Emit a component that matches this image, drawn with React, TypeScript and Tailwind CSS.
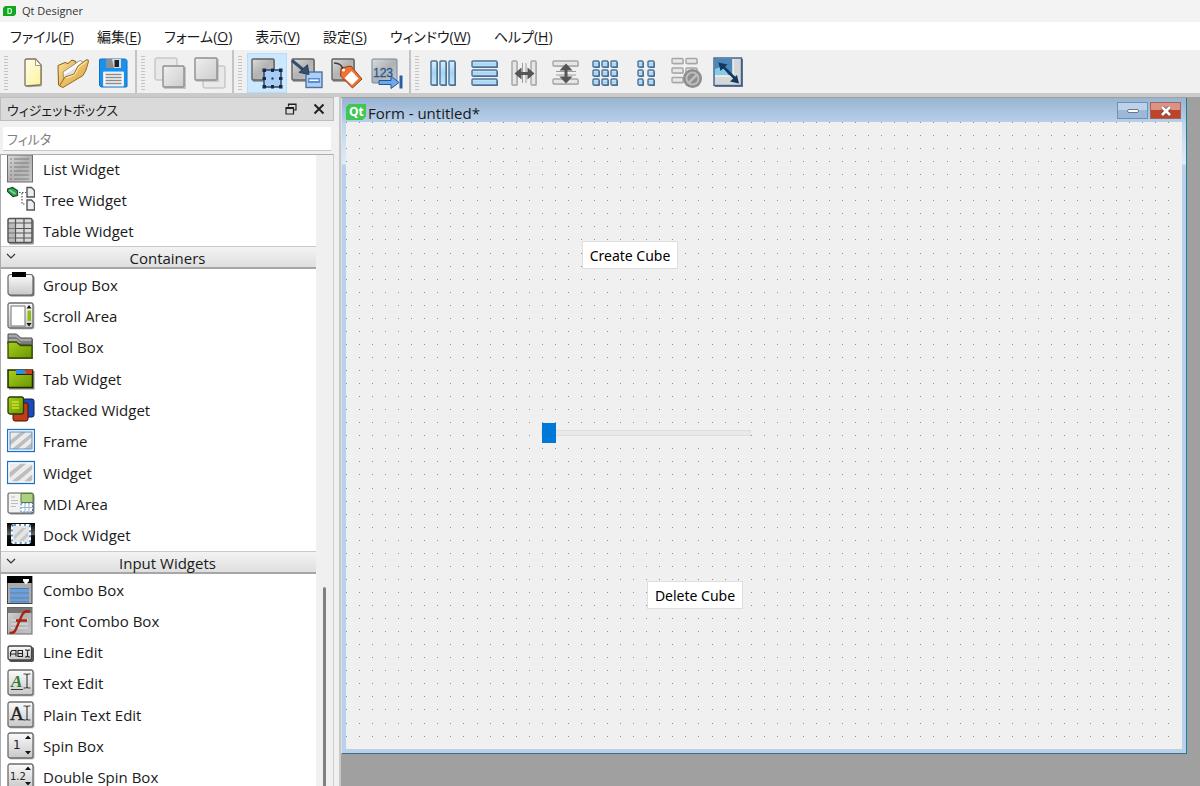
import React from "react";

const UI = "font-['Open_Sans','Noto_Sans_CJK_JP',sans-serif]";

/* ---------- shared gradients ---------- */
function Defs() {
  return (
    <svg className="absolute size-0" aria-hidden="true">
      <defs>
        <linearGradient id="steel" x1="0" y1="0" x2="1" y2="1">
          <stop offset="0" stopColor="#dcdcdc" />
          <stop offset="0.5" stopColor="#b2b2b2" />
          <stop offset="1" stopColor="#c6c6c6" />
        </linearGradient>
        <linearGradient id="pale" x1="0" y1="0" x2="1" y2="1">
          <stop offset="0" stopColor="#efefef" />
          <stop offset="1" stopColor="#cdcdcd" />
        </linearGradient>
        <linearGradient id="sky" x1="0" y1="0" x2="0" y2="1">
          <stop offset="0" stopColor="#d8f0ff" />
          <stop offset="0.5" stopColor="#a5d4f3" />
          <stop offset="1" stopColor="#c4e6fb" />
        </linearGradient>
        <linearGradient id="yellow" x1="0" y1="0" x2="1" y2="1">
          <stop offset="0" stopColor="#fffdee" />
          <stop offset="1" stopColor="#fdf296" />
        </linearGradient>
        <linearGradient id="folder" x1="0" y1="0" x2="1" y2="1">
          <stop offset="0" stopColor="#ffe49a" />
          <stop offset="1" stopColor="#d39c35" />
        </linearGradient>
        <linearGradient id="green" x1="0" y1="0" x2="1" y2="1">
          <stop offset="0" stopColor="#a6cf1d" />
          <stop offset="1" stopColor="#6c9600" />
        </linearGradient>
        <linearGradient id="panel" x1="0" y1="0" x2="0" y2="1">
          <stop offset="0" stopColor="#fbfbfb" />
          <stop offset="1" stopColor="#c8c8c8" />
        </linearGradient>
        <linearGradient id="dark" x1="0" y1="0" x2="0" y2="1">
          <stop offset="0" stopColor="#000" />
          <stop offset="0.5" stopColor="#666" />
          <stop offset="0.55" stopColor="#111" />
          <stop offset="1" stopColor="#000" />
        </linearGradient>
      </defs>
    </svg>
  );
}

function Svg({ children }: { children: React.ReactNode }) {
  return (
    <svg viewBox="0 0 32 32" className="size-8 shrink-0" aria-hidden="true">
      {children}
    </svg>
  );
}

/* ---------- toolbar icons ---------- */
const NewIcon = () => (
  <Svg>
    <path d="M9 4q0-1.500 1.500-1.500h9l5.500 6V28q0 1.500-1.500 1.500l-12 .8q-1.500 0-2.500-1.500z" fill="#999" opacity="0.700" />
    <path d="M8 3.500q0-1.500 1.500-1.500h9l5.500 6V26.500q0 1.500-1.500 1.500l-13 1q-1.500 0-1.500-1.500z" fill="url(#yellow)" stroke="#7b745f" strokeWidth="1.300" />
    <path d="M18.500 2v6.500H24z" fill="#fff" stroke="#8b8470" strokeWidth="0.800" />
  </Svg>
);
const OpenIcon = () => (
  <Svg>
    <path d="M1 8.500l7-3 3 1 4-3.500 4 1.500v5L4 29 1.500 28z" fill="url(#folder)" stroke="#8c5e1b" strokeWidth="1" />
    <path d="M6 15L23 3.500l4 2 1 9L7 24z" fill="#fafafa" stroke="#8d8d8d" strokeWidth="0.900" />
    <path d="M7 18L27 6l2 3L8 23z" fill="#e0e2e6" />
    <path d="M2.500 29L8 20l9-3L21 9l8-6q3-1 2.500 1.500L29 13 26 18.500 6 30.500z" fill="url(#folder)" stroke="#9a6a1f" strokeWidth="1" />
    <path d="M9 21l8.500-3L22 10l7.500-5.500" fill="none" stroke="#fff0bd" />
  </Svg>
);
const SaveIcon = () => (
  <Svg>
    <path d="M2.500 3q0-1 1-1h25L30 3.500V29q0 1-1 1H4l-1.500-1.500z" fill="#1992ee" stroke="#0d72cb" strokeWidth="1" />
    <path d="M9 2h15v9H9z" fill="#d9dde2" />
    <path d="M9 2h6l2 9H9z" fill="#8a8f94" />
    <path d="M17.500 3H22v7h-4.500z" fill="#222" />
    <path d="M6.500 15h20v14h-20z" fill="#fafafa" stroke="#e1e9f2" />
    <path d="M8.500 17.500h16M8.500 20.500h16M8.500 23.500h16M8.500 26.500h16" stroke="#8b8b8b" strokeWidth="1.300" />
  </Svg>
);
const BackIcon = () => (
  <Svg>
    <rect x="1" y="1" width="22" height="22" rx="1.500" fill="#e9e9e9" stroke="#b5b5b5" />
    <rect x="10" y="10" width="22" height="22" fill="#aaa" opacity="0.600" />
    <rect x="9" y="9" width="21" height="21" rx="1" fill="url(#pale)" stroke="#8e8e8e" strokeWidth="1.400" />
  </Svg>
);
const FrontIcon = () => (
  <Svg>
    <rect x="9" y="9" width="22" height="22" rx="1.500" fill="#e9e9e9" stroke="#b5b5b5" />
    <rect x="2" y="2" width="23" height="23" fill="#aaa" opacity="0.500" />
    <rect x="1" y="1" width="22" height="22" rx="1" fill="url(#pale)" stroke="#8e8e8e" strokeWidth="1.400" />
  </Svg>
);
const GreyBox = ({ w = 22 }: { w?: number }) => (
  <>
    <rect x="2" y="3" width={w} height="22" fill="#888" opacity="0.700" />
    <rect x="1" y="2" width={w} height="21" rx="1" fill="url(#steel)" stroke="#616161" strokeWidth="1.400" />
  </>
);
const EditWidgetsIcon = () => (
  <Svg>
    <GreyBox />
    <rect x="13" y="13" width="17" height="17" fill="#a9cdf5" stroke="#2c4466" strokeWidth="1.500" />
    <path d="M11.500 11.500h3.500v3.500h-3.500zM20 11.500h3v3.500h-3zM28 11.500h3.500v3.500H28zM11.500 20h3.500v3h-3.500zM28 20h3.500v3H28zM11.500 28h3.500v3.500h-3.500zM20 28h3v3.500h-3zM28 28h3.500v3.500H28zM20.500 20.500h2v2h-2z" fill="#172b48" />
  </Svg>
);
const SignalsIcon = () => (
  <Svg>
    <GreyBox />
    <rect x="15" y="15" width="16" height="15.500" fill="#a9d0f7" stroke="#52709b" strokeWidth="1.400" />
    <path d="M17 21h12v5H17z" fill="#5d8dce" />
    <path d="M18.500 22.500h9v1.500h-9z" fill="#fff" />
    <path d="M1 3.500l11 9" stroke="#35506f" strokeWidth="3" />
    <path d="M18 17.500l-10-2.200 3-2-1.500-2 2.500 0.500 4.500-4z" fill="#35506f" stroke="#263d5c" />
  </Svg>
);
const BuddiesIcon = () => (
  <Svg>
    <GreyBox />
    <path d="M10 11l10-2L31 22l-9.500 9L9.500 19z" fill="#ef7133" stroke="#934018" strokeWidth="1" />
    <path d="M20.500 14l7 7.500-6.500 6.500-7.500-7z" fill="#fff" />
    <path d="M3 6q8 0 9 7" fill="none" stroke="#3c3c3c" strokeWidth="1.400" />
    <circle cx="12.500" cy="13" r="1.500" fill="#fff" />
  </Svg>
);
const TabOrderIcon = () => (
  <Svg>
    <rect x="1" y="2" width="25" height="24" rx="1" fill="url(#steel)" stroke="#7288a3" />
    <text x="2" y="20" fontSize="12" fill="#1d5a9b" stroke="#1d5a9b" strokeWidth="0.300" className="font-['Liberation_Sans',sans-serif]">123</text>
    <path d="M8 23.500h12V19l8 6.500-8 6V27.500H8z" fill="#6daaea" stroke="#25559a" />
    <path d="M28.500 18.500h3v13h-3z" fill="#2a5ca1" />
  </Svg>
);
type BarProps = { x: number; y: number; w: number; h: number; off?: boolean };
const Bar = ({ x, y, w, h, off }: BarProps) => (
  <>
    <rect x={x + 1} y={y + 1} width={w} height={h} rx="1" fill={off ? "#c2c2c2" : "#39597d"} opacity="0.900" />
    <rect x={x} y={y} width={w} height={h} rx="1" fill={off ? "#e6e6e6" : "url(#sky)"} stroke={off ? "#a6a6a6" : "#4d7298"} strokeWidth="1.400" />
  </>
);
const HorizontalIcon = () => <Svg>{[3, 12, 21].map((x) => <Bar key={x} x={x} y={4} w={6} h={24} />)}</Svg>;
const VerticalIcon = () => <Svg>{[4, 13, 22].map((y) => <Bar key={y} x={3} y={y} w={25} h={6} />)}</Svg>;
const HSplitIcon = () => (
  <Svg>
    <Bar x={3} y={4} w={5} h={24} off />
    <Bar x={22} y={4} w={5} h={24} off />
    <path d="M13.500 6v20M17 6v20" stroke="#888" strokeWidth="0.800" />
    <path d="M5.500 16.500l7-6v4.500h6v-4.500l7 6-7 6V18h-6v4.500z" fill="#555" />
  </Svg>
);
const VSplitIcon = () => (
  <Svg>
    <Bar x={3} y={4} w={25} h={5} off />
    <Bar x={3} y={22} w={25} h={5} off />
    <path d="M6 14.500h20M6 18h20" stroke="#888" strokeWidth="0.800" />
    <path d="M16 6.500l6.500 7h-5v6h5l-6.500 7-6.500-7h5v-6h-5z" fill="#555" />
  </Svg>
);
const GridIcon = () => (
  <Svg>{[4, 13, 22].map((y) => [3, 12, 21].map((x) => <Bar key={`${x}-${y}`} x={x} y={y} w={6} h={6} />))}</Svg>
);
const FormLayoutIcon = () => (
  <Svg>{[4, 13, 22].map((y) => [7, 17].map((x) => <Bar key={`${x}-${y}`} x={x} y={y} w={x === 7 ? 5 : 6} h={6} />))}</Svg>
);
const BreakIcon = () => (
  <Svg>
    {[1.500, 11, 20.500].map((y) => [1, 15].map((x) => <Bar key={`${x}-${y}`} x={x} y={y} w={11} h={5} off />))}
    <circle cx="21.500" cy="21.500" r="9.500" fill="#8d8d8d" />
    <circle cx="21.500" cy="21.500" r="6" fill="none" stroke="#bcbcbc" strokeWidth="2" />
    <path d="M17.500 26l8.500-8.500" stroke="#bcbcbc" strokeWidth="2.500" />
  </Svg>
);
const AdjustIcon = () => (
  <Svg>
    <rect x="3" y="2" width="28" height="28" fill="#6c7683" />
    <rect x="2" y="1" width="27.500" height="27.500" fill="#d7d7d7" stroke="#36628f" strokeWidth="1.400" />
    <path d="M3 2h18v17H3z" fill="#4b87bb" />
    <path d="M3 19V12l8-3 6 10z" fill="#88cbe9" />
    <path d="M21 2v17H3" fill="none" stroke="#f4f4f4" strokeWidth="1.500" />
    <path d="M10 8.500l13 13" stroke="#12395e" strokeWidth="2.500" />
    <path d="M6.500 5.500l9 2-7 6.500zM27 26.500l-9-2 7-6.500z" fill="#12395e" />
  </Svg>
);

/* ---------- widget box icons ---------- */
const IconBox = ({ children }: { children: React.ReactNode }) => (
  <svg viewBox="0 0 28 28" className="size-7 shrink-0" aria-hidden="true">
    {children}
  </svg>
);
const PanelBase = () => (
  <>
    <rect x="2" y="2" width="25.500" height="25.500" rx="2" fill="#999" opacity="0.600" />
    <rect x="1" y="1" width="25" height="25" rx="2" fill="url(#panel)" stroke="#6c6c6c" strokeWidth="1.300" />
  </>
);
const ListIcon = () => (
  <IconBox>
    <rect x="0.500" y="0" width="25" height="27" fill="url(#steel)" stroke="#6d6d6d" />
    <path d="M3 4h2M3 8h2M3 12h2M3 16h2M3 20h2M3 24h2M7 4h15M7 8h15M7 12h15M7 16h15M7 20h15M7 24h15" stroke="#7c7c7c" strokeWidth="1.200" />
  </IconBox>
);
const TreeIcon = () => (
  <IconBox>
    <path d="M0.500 3l5-1.500 5 3v5L6 10.500 0.500 5.500z" fill="#33a650" stroke="#174f26" strokeWidth="1.200" />
    <path d="M2.500 4l6 4" stroke="#8cdf9d" strokeWidth="1.500" />
    <path d="M12 6.500h7M15 7v11h4" fill="none" stroke="#555" strokeWidth="1.200" strokeDasharray="1.500 1.500" />
    <path d="M20 1.500h4.500l3 3V11H20zM20 14h4.500l3 3v7H20z" fill="#eee" stroke="#555" strokeWidth="1.400" />
  </IconBox>
);
const TableIcon = () => (
  <IconBox>
    <rect x="2" y="2.500" width="25" height="25" rx="1.500" fill="#999" />
    <rect x="1" y="1.500" width="24" height="24" rx="1.500" fill="#dadada" stroke="#555" strokeWidth="1.500" />
    <path d="M1 6h24M1 11.500h24M1 16h24M1 21h24M8.500 1.500v24M17 1.500v24" stroke="#555" strokeWidth="1.200" />
    <path d="M2 7h6v18H2z" fill="#999" opacity="0.500" />
  </IconBox>
);
const GroupIcon = () => (
  <IconBox>
    <rect x="2" y="4.500" width="25.500" height="21" rx="2.500" fill="#777" />
    <rect x="1" y="3.500" width="25" height="20.500" rx="2.500" fill="url(#panel)" stroke="#666" strokeWidth="1.200" />
    <path d="M5 1h14v5H5z" fill="#000" />
  </IconBox>
);
const ScrollIcon = () => (
  <IconBox>
    <PanelBase />
    <rect x="4" y="4" width="14" height="20" fill="#fff" stroke="#888" strokeWidth="1.200" />
    <path d="M22 3l2.500 3.500h-5zM22 24.500l2.500-3.500h-5z" fill="#111" />
    <path d="M20.500 8.500h3.500v10.500h-3.500z" fill="#8cbe10" />
  </IconBox>
);
const ToolBoxIcon = () => (
  <IconBox>
    <path d="M2 2h9l4 4h11v20H2z" fill="#777" />
    <path d="M1 1h8.500l4 4H25v6H1z" fill="#a7a7a7" stroke="#4b4b4b" />
    <path d="M1 5h8.500l4 4H25" fill="none" stroke="#555" />
    <path d="M1 9h8.500l4 3.500H25V25H1z" fill="url(#green)" stroke="#344800" strokeWidth="1.300" />
  </IconBox>
);
const TabIcon = () => (
  <IconBox>
    <rect x="2" y="6" width="25.500" height="18.500" fill="#888" />
    <rect x="1" y="5" width="24.500" height="17.500" fill="url(#green)" stroke="#202a00" strokeWidth="1.500" />
    <path d="M9 5h9v4H9z" fill="#2b8ded" />
    <path d="M18.500 5H25v4h-6.500z" fill="#d93a1e" />
    <path d="M9 9.500h16" stroke="#202a00" />
  </IconBox>
);
const StackIcon = () => (
  <IconBox>
    <rect x="12" y="3" width="15" height="18" rx="2" fill="#174cb9" stroke="#0b2252" />
    <rect x="6" y="7" width="15" height="18" rx="2" fill="#c53b19" stroke="#3f1207" />
    <rect x="1" y="1" width="15.500" height="17" rx="2" fill="url(#green)" stroke="#28370a" strokeWidth="1.300" />
    <path d="M5 6h7M5 9h7M5 12h7" stroke="#ecff36" strokeWidth="1.200" />
  </IconBox>
);
const Stripes = () => (
  <path d="M3 14L14 4h5L3 20zM5 24L25 5v5L11 24zM17 24l8-8v6l-2 2z" fill="#bdbdbd" />
);
const FrameIcon = () => (
  <IconBox>
    <rect x="0.500" y="2.500" width="27" height="22" fill="#fff" stroke="#1e70c5" strokeWidth="1.300" />
    <rect x="3" y="5" width="22" height="17" fill="#ececec" />
    <svg x="3" y="5" width="22" height="17" viewBox="3 4 22 20" preserveAspectRatio="none"><Stripes /></svg>
    <rect x="3" y="5" width="22" height="17" fill="none" stroke="#5e94c9" />
  </IconBox>
);
const WidgetIcon = () => (
  <IconBox>
    <rect x="0.500" y="2.500" width="27" height="22" fill="#fff" stroke="#1e70c5" strokeWidth="1.300" />
    <rect x="2.500" y="4.500" width="23" height="18" fill="#ececec" />
    <svg x="2.500" y="4.500" width="23" height="18" viewBox="3 4 22 20" preserveAspectRatio="none"><Stripes /></svg>
  </IconBox>
);
const MdiIcon = () => (
  <IconBox>
    <rect x="2" y="4" width="25.500" height="20.500" rx="2" fill="#888" />
    <rect x="1" y="3" width="25" height="20" rx="1.500" fill="#f2f2f2" stroke="#666" strokeWidth="1.200" />
    <path d="M14 3.500h12v9H14z" fill="#add180" stroke="#5a7c38" />
    <path d="M14 13h11.500v9H14z" fill="#fff" stroke="#3976bb" strokeDasharray="2 1.500" />
    <path d="M18 13v9M22 13v9M14 17.500h12" stroke="#9bb5d4" />
    <path d="M4 7h4M4 10.500h7M4 13.500h7M4 16.500h5" stroke="#bdbdbd" />
  </IconBox>
);
const DockIcon = () => (
  <IconBox>
    <rect x="0" y="2" width="28" height="23" fill="url(#dark)" />
    <rect x="5" y="4" width="18" height="18" rx="2" fill="#e5e5e5" stroke="#fff" strokeWidth="2" />
    <rect x="5" y="4" width="18" height="18" rx="2" fill="none" stroke="#2675bf" strokeWidth="1.500" strokeDasharray="2 3" />
    <path d="M7 15l8-8h4L7 19zM12 20l9-9v4l-5 5z" fill="#c6c6c6" />
  </IconBox>
);
const ComboIcon = () => (
  <IconBox>
    <rect x="0.500" y="0.500" width="24.500" height="27" fill="#a9abad" stroke="#444" />
    <path d="M0 0h25v7H0z" fill="#000" />
    <path d="M16 3h6v2L19 8.500 16 5z" fill="#fff" />
    <path d="M3 12.500h19v4H3zM3 17.500h19v4H3zM3 22.500h19v3.500H3z" fill="#6ba0df" />
    <path d="M3 17h19M3 22h19M3 12.500h19M3 26h19" stroke="#35679e" strokeWidth="0.700" />
  </IconBox>
);
const FontIcon = () => (
  <IconBox>
    <rect x="0.500" y="0.500" width="24.500" height="26.500" fill="url(#steel)" stroke="#666" />
    <path d="M1 1h24v5H1z" fill="#777" />
    <path d="M4 13h17M4 17h17M4 21h17" stroke="#d0d0d0" strokeWidth="2" />
    <path d="M23 5q-5-2.500-8 3L9 22q-2 5-6.500 3.500M9 13.500h11" fill="none" stroke="#a62214" strokeWidth="2.300" />
  </IconBox>
);
const LineEditIcon = () => (
  <IconBox>
    <rect x="2" y="9" width="25" height="15" rx="2" fill="#555" />
    <rect x="1" y="8" width="23.500" height="14" rx="2" fill="url(#panel)" stroke="#444" strokeWidth="1.300" />
    <path d="M3.500 18.500v-4l1.500-2h4v6M3.500 16H9M11 12.500v6h4.500v-6zM11 15.500h4.500M18 12h1.500l1 1 1-1H23M20.500 13v5.500M18 19h1.500l1-1 1 1H23" fill="none" stroke="#222" strokeWidth="1.100" />
  </IconBox>
);
const Caret = () => <path d="M16.500 5h2.500l1 1 1-1h2.500M20 6v12M16.500 19h2.500l1-1 1 1h2.500" fill="none" stroke="#444" strokeWidth="1.200" />;
const TextEditIcon = () => (
  <IconBox>
    <PanelBase />
    <text x="4" y="18" fontSize="17" fontStyle="italic" fontWeight="bold" fill="#2e7a36" className="font-['Liberation_Serif',serif]">A</text>
    <path d="M4 20.500h12" stroke="#333" />
    <Caret />
  </IconBox>
);
const PlainIcon = () => (
  <IconBox>
    <PanelBase />
    <text x="3" y="19" fontSize="19" fill="#222" stroke="#222" strokeWidth="0.400" className="font-['Liberation_Serif',serif]">A</text>
    <Caret />
  </IconBox>
);
const Arrows = () => <path d="M21 3.500l3 3.500h-6zM21 22.500l3-3.500h-6z" fill="#111" />;
const SpinIcon = () => (
  <IconBox>
    <PanelBase />
    <text x="6" y="17" fontSize="12" fill="#222" className="font-['DejaVu_Sans',sans-serif]">1</text>
    <Arrows />
  </IconBox>
);
const DoubleSpinIcon = () => (
  <IconBox>
    <PanelBase />
    <text x="3" y="17" fontSize="10" fill="#222" className="font-['DejaVu_Sans',sans-serif]">1.2</text>
    <Arrows />
  </IconBox>
);

/* ---------- data ---------- */
type Entry = { label: string; icon: React.ComponentType };

const views: Entry[] = [
  { label: "List Widget", icon: ListIcon },
  { label: "Tree Widget", icon: TreeIcon },
  { label: "Table Widget", icon: TableIcon },
];
const containers: Entry[] = [
  { label: "Group Box", icon: GroupIcon },
  { label: "Scroll Area", icon: ScrollIcon },
  { label: "Tool Box", icon: ToolBoxIcon },
  { label: "Tab Widget", icon: TabIcon },
  { label: "Stacked Widget", icon: StackIcon },
  { label: "Frame", icon: FrameIcon },
  { label: "Widget", icon: WidgetIcon },
  { label: "MDI Area", icon: MdiIcon },
  { label: "Dock Widget", icon: DockIcon },
];
const inputs: Entry[] = [
  { label: "Combo Box", icon: ComboIcon },
  { label: "Font Combo Box", icon: FontIcon },
  { label: "Line Edit", icon: LineEditIcon },
  { label: "Text Edit", icon: TextEditIcon },
  { label: "Plain Text Edit", icon: PlainIcon },
  { label: "Spin Box", icon: SpinIcon },
  { label: "Double Spin Box", icon: DoubleSpinIcon },
];
const menus = [
  ["ファイル", "F"],
  ["編集", "E"],
  ["フォーム", "O"],
  ["表示", "V"],
  ["設定", "S"],
  ["ウィンドウ", "W"],
  ["ヘルプ", "H"],
];

/* ---------- parts ---------- */
function Tool({ label, icon: Icon, active }: Entry & { active?: boolean }) {
  return (
    <button
      aria-label={label}
      className={`flex h-10 min-w-10 items-center justify-center ${active ? "bg-[#cce8ff] outline outline-1 -outline-offset-1 outline-[#b5dcfb]" : ""}`}
    >
      <Icon />
    </button>
  );
}

function ToolGroup({ children, last }: { children: React.ReactNode; last?: boolean }) {
  return (
    <div className={`flex items-center gap-[5px] pl-1 pr-0.5 pt-0.5 ${last ? "" : "border-r-2 border-[#c4c4c4]"}`}>
      <span className="h-9 w-1 bg-[radial-gradient(circle,#c4c4c4_1px,transparent_1px)] bg-[size:2px_3px]" />
      {children}
    </div>
  );
}

function Rows({ items, className }: { items: Entry[]; className: string }) {
  return (
    <ul className={`grid auto-rows-fr pl-1.5 ${className}`}>
      {items.map(({ label, icon: Icon }) => (
        <li key={label} className="flex min-h-0 items-center gap-2">
          <Icon />
          {label}
        </li>
      ))}
    </ul>
  );
}

function SectionHeader({ children }: { children: React.ReactNode }) {
  return (
    <button className="relative flex h-[23px] w-full items-center justify-center border-b-2 border-t border-b-[#a6a6a6] border-t-[#c9c9c9] bg-linear-to-b from-[#f3f3f3] to-[#dfdfdf] pl-[18px] pt-0.5">
      <svg viewBox="0 0 10 10" className="absolute left-[5px] top-1 size-2.5" aria-hidden="true">
        <path d="M1 3l4 4 4-4" fill="none" stroke="#333" strokeWidth="1.200" />
      </svg>
      {children}
    </button>
  );
}

const STEP = 13.055;
const dots = (() => {
  let d = "";
  for (let r = 0; r < 48; r++)
    for (let c = 0; c < 64; c++) d += `M${Math.round(c * STEP)} ${Math.round(r * STEP)}h1v1h-1z`;
  return d;
})();

export default function App() {
  return (
    <div className={`flex h-screen flex-col overflow-hidden bg-[#f0f0f0] text-[15px] leading-5 text-[#1a1a1a] ${UI}`}>
      <Defs />
      <header className="flex h-[22px] shrink-0 items-center gap-1.5 bg-[#f3f3f3] pl-[3px] text-[11px] text-[#333]">
        <svg viewBox="0 0 13 10" className="h-2.5 w-[13px]" aria-hidden="true">
          <path d="M2 0h11v8l-2 2H0V2z" fill="#11a81f" />
          <path d="M5 2.500h1.500q2 0 2 2.500t-2 2.500H5z" fill="none" stroke="#d8ffd8" strokeWidth="1.200" />
        </svg>
        Qt Designer
      </header>

      <nav className="flex h-7 shrink-0 items-center gap-[23px] bg-white pl-2.5 pt-0.5 text-sm [font-feature-settings:'palt']">
        {menus.map(([name, key]) => (
          <button key={key} className="whitespace-nowrap">
            {name}(<span className="underline underline-offset-2">{key}</span>)
          </button>
        ))}
      </nav>

      <div className="flex h-[47px] shrink-0 items-stretch border-b-4 border-[#cacaca]" role="toolbar" aria-label="Tools">
        <ToolGroup>
          <div className="flex">
            <Tool label="New" icon={NewIcon} />
            <Tool label="Open" icon={OpenIcon} />
            <Tool label="Save" icon={SaveIcon} />
          </div>
        </ToolGroup>
        <ToolGroup>
          <div className="flex">
            <Tool label="Send to back" icon={BackIcon} />
            <Tool label="Bring to front" icon={FrontIcon} />
          </div>
        </ToolGroup>
        <ToolGroup>
          <div className="flex">
            <Tool label="Edit widgets" icon={EditWidgetsIcon} active />
            <Tool label="Edit signals" icon={SignalsIcon} />
            <Tool label="Edit buddies" icon={BuddiesIcon} />
            <Tool label="Edit tab order" icon={TabOrderIcon} />
          </div>
        </ToolGroup>
        <ToolGroup last>
          <div className="grid w-[324px] auto-cols-fr grid-flow-col">
            <Tool label="Lay out horizontally" icon={HorizontalIcon} />
            <Tool label="Lay out vertically" icon={VerticalIcon} />
            <Tool label="Horizontal splitter" icon={HSplitIcon} />
            <Tool label="Vertical splitter" icon={VSplitIcon} />
            <Tool label="Grid layout" icon={GridIcon} />
            <Tool label="Form layout" icon={FormLayoutIcon} />
            <Tool label="Break layout" icon={BreakIcon} />
            <Tool label="Adjust size" icon={AdjustIcon} />
          </div>
        </ToolGroup>
      </div>

      <div className="flex min-h-0 flex-1">
        <aside className="flex w-[334px] shrink-0 flex-col">
          <div className="flex h-6 shrink-0 items-center border border-[#bdbdbd] bg-[#dadada] pl-1.5 pr-2 [font-feature-settings:'palt']">
            <h2 className="flex-1 pt-px text-[13px]">ウィジェットボックス</h2>
            <button aria-label="Float" className="mr-4">
              <svg viewBox="0 0 12 12" className="size-3" aria-hidden="true">
                <path d="M3.500 3.500V1h7.500v6H8.500M3 1.500h8M1 4.500h7.500V11H1zM1 5.500h7.500" fill="none" stroke="#222" strokeWidth="1.200" />
              </svg>
            </button>
            <button aria-label="Close">
              <svg viewBox="0 0 12 12" className="size-3" aria-hidden="true">
                <path d="M1.500 1.500l9 9M10.500 1.500l-9 9" stroke="#222" strokeWidth="2" />
              </svg>
            </button>
          </div>
          <input
            aria-label="フィルタ"
            placeholder="フィルタ"
            className="mx-[3px] mb-[3px] mt-1.5 h-6 shrink-0 border-b border-[#c8c8c8] bg-white pl-1 text-[13px] outline-none placeholder:text-[#808080] [font-feature-settings:'palt']"
          />
          <div className="flex min-h-0 flex-1 border-l border-r border-t border-[#a9adb3] border-r-[#cfcfcf]">
            <div className="min-w-0 flex-1 overflow-hidden bg-white">
              <Rows items={views} className="-mt-0.5 h-[93px]" />
              <SectionHeader>Containers</SectionHeader>
              <Rows items={containers} className="h-[282px]" />
              <SectionHeader>Input Widgets</SectionHeader>
              <Rows items={inputs} className="h-[219px]" />
            </div>
            <div className="flex w-[17px] justify-center pt-[432px]">
              <span className="w-[3px] rounded-t bg-[#808080]" />
            </div>
          </div>
        </aside>

        <div className="w-[7px] shrink-0 border-r-2 border-[#c8c8c8]" />

        <main className="flex min-w-0 flex-1 bg-[#a0a0a0] pb-8 pr-[13px] pt-px">
          <section className="flex min-w-0 flex-1 flex-col border-b border-l border-r border-b-[#3f6f80] border-l-[#d6e4f2] border-r-[#1b7f97] bg-[#b9d1ea]">
            <div className="flex h-6 shrink-0 items-start bg-linear-to-b from-[#99b4d1] to-[#b7cfe9] pl-1 pr-[5px] pt-[5px]">
              <svg viewBox="0 0 20 16" className="mt-px h-4 w-5" aria-hidden="true">
                <path d="M3 0h17v12.500L16.500 16H0V3z" fill="#3fc653" />
                <text x="3" y="12" fontSize="12" fontWeight="bold" fill="#fff" className="font-['Open_Sans',sans-serif]">Qt</text>
              </svg>
              <h1 className="flex-1 pl-0.5">Form - untitled*</h1>
              <button aria-label="Minimize" className="-mt-px mr-0.5 flex h-[17px] w-[31px] items-center justify-center border border-[#7190b5] bg-linear-to-b from-[#bdd2e9] from-50% to-[#9bb8d8] to-50%">
                <span className="h-1 w-3 rounded-sm border border-[#66758a] bg-white" />
              </button>
              <button aria-label="Close form" className="-mt-px flex h-[17px] w-[31px] items-center justify-center border border-[#a0655f] bg-linear-to-b from-[#dd9384] from-45% to-[#bd4429] to-45%">
                <svg viewBox="0 0 12 10" className="h-2.5 w-3" aria-hidden="true">
                  <path d="M2 1l8 8M10 1L2 9" stroke="#6a4a4a" strokeWidth="4" />
                  <path d="M2 1l8 8M10 1L2 9" stroke="#fff" strokeWidth="2.600" />
                </svg>
              </button>
            </div>
            <div className="flex min-h-0 flex-1 bg-[linear-gradient(#bfd5eb,#dfecf8_42px,#b9d1ea_43px)] px-1 pb-1">
              <div className="relative min-w-0 flex-1 overflow-hidden bg-[#f0f0f0] font-['Noto_Sans',sans-serif]">
                <svg className="block size-full" aria-hidden="true">
                  <path d={dots} fill="#8c8c8c" shapeRendering="crispEdges" />
                </svg>
                <button className="absolute left-[236px] top-[119px] h-7 w-24 border border-[#dedede] bg-white pt-0.5 text-sm text-black">Create Cube</button>
                <button className="absolute left-[301px] top-[459px] h-7 w-24 border border-[#dedede] bg-white pt-0.5 text-sm text-black">Delete Cube</button>
                <input
                  type="range"
                  aria-label="Horizontal slider"
                  defaultValue={0}
                  className="absolute left-[195px] top-[300px] h-[21px] w-[210px] appearance-none bg-transparent [&::-webkit-slider-runnable-track]:h-[6px] [&::-webkit-slider-runnable-track]:border [&::-webkit-slider-runnable-track]:border-[#dedede] [&::-webkit-slider-runnable-track]:bg-[#e7eaea] [&::-webkit-slider-thumb]:-mt-2 [&::-webkit-slider-thumb]:h-5 [&::-webkit-slider-thumb]:w-[14px] [&::-webkit-slider-thumb]:appearance-none [&::-webkit-slider-thumb]:bg-[#0078d7]"
                />
              </div>
            </div>
          </section>
        </main>
      </div>
    </div>
  );
}
